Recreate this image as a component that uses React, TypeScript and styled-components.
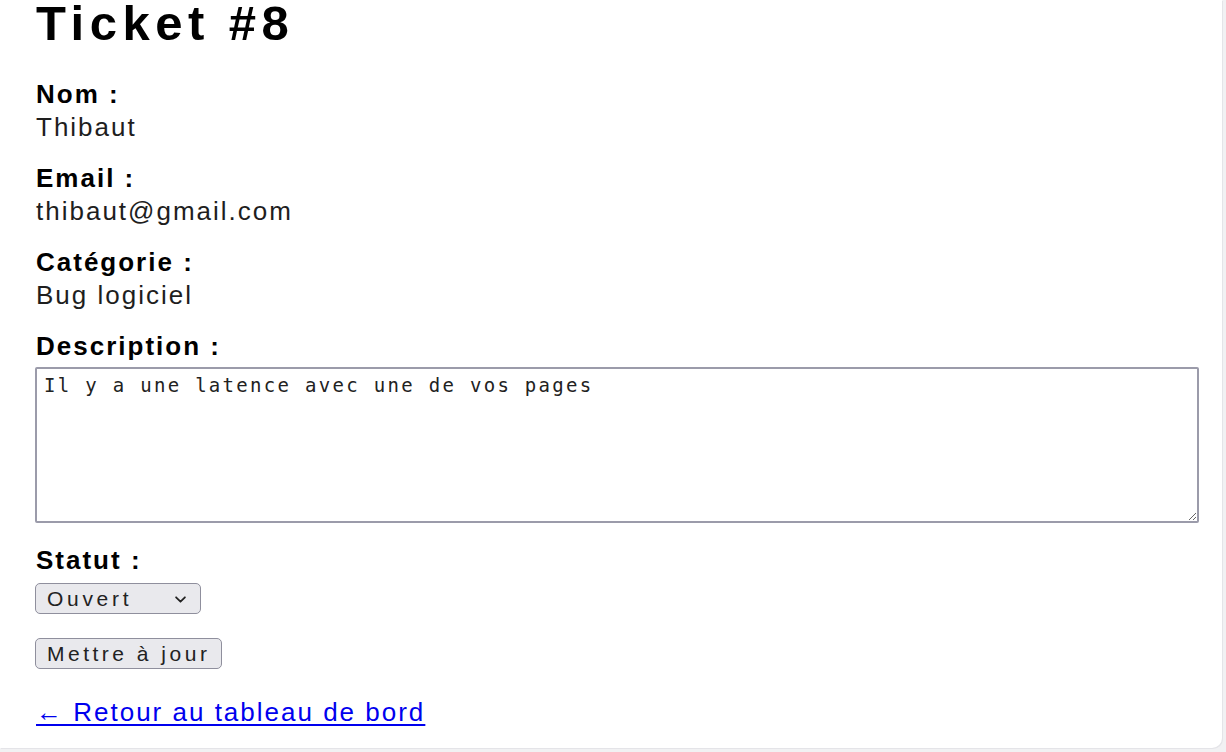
import styled, { createGlobalStyle } from 'styled-components'

const GlobalStyle = createGlobalStyle`
  html, body {
    margin: 0;
    padding: 0;
    background: #f1f1f3;
  }
  * {
    box-sizing: border-box;
  }
`

const fields = [
  { label: 'Nom :', value: 'Thibaut' },
  { label: 'Email :', value: 'thibaut@gmail.com' },
  { label: 'Catégorie :', value: 'Bug logiciel' },
]

const App = () => {
  return (
    <Page>
      <GlobalStyle />
      <Card>
        <Title>Ticket #8</Title>
        {fields.map((f) => (
          <Field key={f.label}>
            <Label>{f.label}</Label>
            <Value>{f.value}</Value>
          </Field>
        ))}
        <Field $gap={21}>
          <Label>Description :</Label>
          <Description
            readOnly
            defaultValue="Il y a une latence avec une de vos pages"
          />
        </Field>
        <Field>
          <Label>Statut :</Label>
          <SelectWrap>
            <StatusSelect defaultValue="ouvert">
              <option value="ouvert">Ouvert</option>
              <option value="en_cours">En cours</option>
              <option value="ferme">Fermé</option>
            </StatusSelect>
            <Chevron viewBox="0 0 10 6" aria-hidden="true">
              <path
                d="M1 1l4 4 4-4"
                fill="none"
                stroke="#222"
                strokeWidth="1.6"
                strokeLinecap="round"
                strokeLinejoin="round"
              />
            </Chevron>
          </SelectWrap>
        </Field>
        <UpdateButton type="button">Mettre à jour</UpdateButton>
        <BackLink href="#">← Retour au tableau de bord</BackLink>
      </Card>
    </Page>
  )
}

export default App

const Page = styled.div`
  min-height: 752px;
  padding: 0 4px 4px 0;
  display: flex;
  flex-direction: column;
`

const Card = styled.div`
  flex: 1;
  display: flex;
  flex-direction: column;
  align-items: flex-start;
  background: #ffffff;
  border-bottom-right-radius: 10px;
  box-shadow: 1px 1px 0 #e4e4e8;
  padding: 0 23px 0 36px;
  font-family: 'Liberation Sans', Arial, sans-serif;
  color: #1e1e1e;
`

const Title = styled.h1`
  margin: 0 0 32px;
  font-size: 49px;
  line-height: 46px;
  font-weight: 700;
  letter-spacing: 5.5px;
  color: #000;
`

const Field = styled.div<{ $gap?: number }>`
  display: flex;
  flex-direction: column;
  align-self: stretch;
  align-items: flex-start;
  margin-bottom: ${(p) => p.$gap ?? 18}px;
`

const Label = styled.div`
  font-size: 26px;
  line-height: 33px;
  font-weight: 700;
  letter-spacing: 2px;
  color: #000;
`

const Value = styled.div`
  font-size: 26px;
  line-height: 33px;
  letter-spacing: 2px;
  color: #1e1e1e;
`

const Description = styled.textarea`
  align-self: stretch;
  margin: 4px 0 0 -1px;
  height: 156px;
  padding: 5px 7px;
  border: 2px solid #9b9baa;
  border-radius: 2px;
  background: #fff;
  font-family: 'DejaVu Sans Mono', 'Liberation Mono', monospace;
  font-size: 19px;
  line-height: 22px;
  letter-spacing: 2.3px;
  color: #222;
  resize: both;
  outline: none;
`

const SelectWrap = styled.div`
  position: relative;
  margin: 6px 0 0 -1px;
`

const StatusSelect = styled.select`
  appearance: none;
  width: 166px;
  height: 31px;
  padding: 0 0 0 11px;
  border: 1.5px solid #8f8f9d;
  border-radius: 5px;
  background: #e9e9ed;
  font-family: 'Liberation Sans', Arial, sans-serif;
  font-size: 21px;
  letter-spacing: 3.7px;
  color: #222;
`

const Chevron = styled.svg`
  position: absolute;
  right: 15px;
  top: 13px;
  width: 11px;
  height: 7px;
  pointer-events: none;
`

const UpdateButton = styled.button`
  margin: 6px 0 0 -1px;
  height: 31px;
  width: 187px;
  padding: 0 0 0 11px;
  text-align: left;
  border: 1.5px solid #8f8f9d;
  border-radius: 5px;
  background: #e9e9ed;
  font-family: 'Liberation Sans', Arial, sans-serif;
  font-size: 21px;
  letter-spacing: 3.5px;
  color: #222;
  cursor: pointer;
`

const BackLink = styled.a`
  margin-top: 27px;
  font-size: 26px;
  line-height: 33px;
  letter-spacing: 2px;
  color: #0000ee;
  text-decoration: underline;
  text-underline-offset: 3px;
`
